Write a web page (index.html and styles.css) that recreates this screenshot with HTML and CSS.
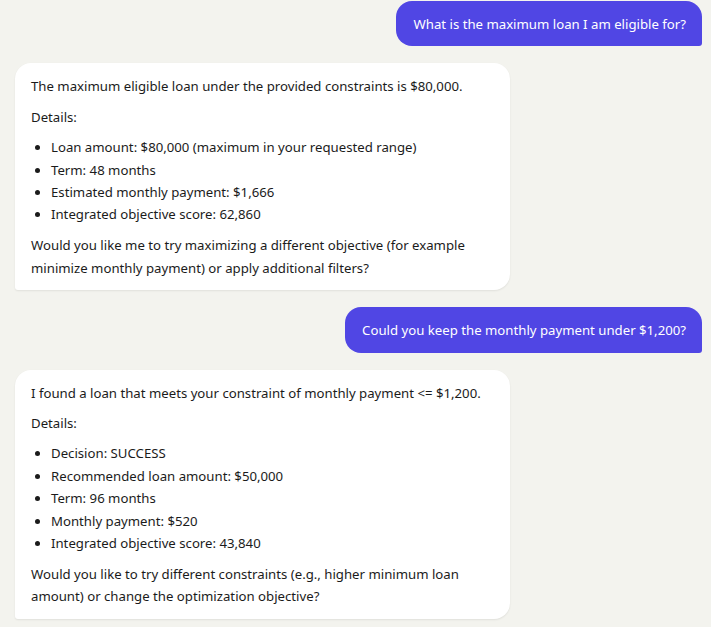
FILE: index.html
```html
<!DOCTYPE html>
<html>
<head>
<meta charset="utf-8">
<link rel="stylesheet" href="styles.css">
</head>
<body>
<div class="chat">
  <div class="msg user"><div class="bubble">What is the maximum loan I am eligible for?</div></div>
  <div class="msg bot"><div class="bubble">
    <p>The maximum eligible loan under the provided constraints is $80,000.</p>
    <p>Details:</p>
    <ul>
      <li>Loan amount: $80,000 (maximum in your requested range)</li>
      <li>Term: 48 months</li>
      <li>Estimated monthly payment: $1,666</li>
      <li>Integrated objective score: 62,860</li>
    </ul>
    <p>Would you like me to try maximizing a different objective (for example minimize monthly payment) or apply additional filters?</p>
  </div></div>
  <div class="msg user"><div class="bubble">Could you keep the monthly payment under $1,200?</div></div>
  <div class="msg bot"><div class="bubble">
    <p>I found a loan that meets your constraint of monthly payment &lt;= $1,200.</p>
    <p>Details:</p>
    <ul>
      <li>Decision: SUCCESS</li>
      <li>Recommended loan amount: $50,000</li>
      <li>Term: 96 months</li>
      <li>Monthly payment: $520</li>
      <li>Integrated objective score: 43,840</li>
    </ul>
    <p>Would you like to try different constraints (e.g., higher minimum loan amount) or change the optimization objective?</p>
  </div></div>
</div>
</body>
</html>
```
FILE: styles.css
```css
html, body {
  margin: 0;
  padding: 0;
  background: #f3f3ee;
}
body {
  font-family: "Noto Sans", "Open Sans", sans-serif;
  font-size: 13.2px;
  color: #1b1b1b;
}
.chat {
  display: flex;
  flex-direction: column;
  gap: 17px;
  padding: 1px 9px 8px 15px;
}
.msg {
  display: flex;
}
.msg.user {
  justify-content: flex-end;
}
.msg.bot {
  justify-content: flex-start;
}
.bubble {
  line-height: 22.4px;
  padding: 12px 16px 11px;
}
.user .bubble {
  background: #5046e4;
  color: #ffffff;
  border-radius: 16px 16px 3px 16px;
  padding: 12px 16px 11px 17px;
}
.bot .bubble {
  background: #ffffff;
  width: 463px;
  border-radius: 16px 16px 16px 3px;
  box-shadow: 0 1px 2px rgba(0, 0, 0, 0.08);
}
.bot p {
  margin: 0;
}
.bot p + p {
  margin-top: 8px;
}
.bot ul + p {
  margin-top: 8.5px;
}
.bot ul {
  margin: 8px 0 0 0;
  padding-left: 20px;
}
```
